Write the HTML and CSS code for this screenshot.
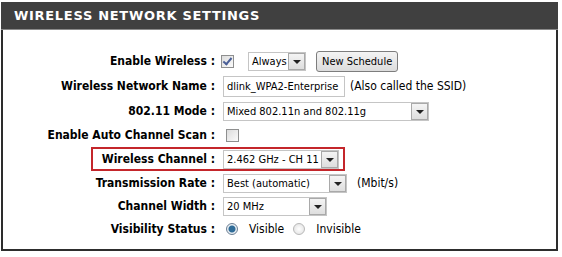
FILE: index.html
```html
<!DOCTYPE html>
<html lang="en">
<head>
  <meta charset="UTF-8" />
  <title>Wireless Network Settings</title>
  <link rel="stylesheet" href="styles.css">
</head>
<body>
  <div class="panel">
    <h2 class="panel-title">WIRELESS NETWORK SETTINGS</h2>

    <div class="panel-body">
      <div class="row">
        <label class="label">Enable Wireless :</label>
        <div class="field">
          <span class="check checked first"></span>
          <span class="select w-always"><span class="select-text">Always</span><span class="arrow"></span></span>
          <button class="btn">New Schedule</button>
        </div>
      </div>

      <div class="row tall">
        <label class="label">Wireless Network Name :</label>
        <div class="field">
          <span class="input w-ssid">dlink_WPA2-Enterprise</span>
          <span class="note">(Also called the SSID)</span>
        </div>
      </div>

      <div class="row">
        <label class="label">802.11 Mode :</label>
        <div class="field">
          <span class="select w-mode"><span class="select-text">Mixed 802.11n and 802.11g</span><span class="arrow"></span></span>
        </div>
      </div>

      <div class="row">
        <label class="label">Enable Auto Channel Scan :</label>
        <div class="field">
          <span class="check indent"></span>
        </div>
      </div>

      <div class="row highlight">
        <label class="label">Wireless Channel :</label>
        <div class="field">
          <span class="select w-channel"><span class="select-text">2.462 GHz - CH 11</span><span class="arrow"></span></span>
        </div>
      </div>

      <div class="row">
        <label class="label">Transmission Rate :</label>
        <div class="field">
          <span class="select w-rate"><span class="select-text">Best (automatic)</span><span class="arrow"></span></span>
          <span class="note">(Mbit/s)</span>
        </div>
      </div>

      <div class="row short">
        <label class="label">Channel Width :</label>
        <div class="field">
          <span class="select w-width"><span class="select-text">20 MHz</span><span class="arrow"></span></span>
        </div>
      </div>

      <div class="row">
        <label class="label">Visibility Status :</label>
        <div class="field">
          <span class="radio checked indent"></span>
          <span class="radio-text">Visible</span>
          <span class="radio"></span>
          <span class="radio-text">Invisible</span>
        </div>
      </div>
    </div>
  </div>
</body>
</html>
```

FILE: styles.css
```css
* {
  margin: 0;
  padding: 0;
  box-sizing: border-box;
}

body {
  background: #fff;
  font-family: 'DejaVu Sans Condensed', 'DejaVu Sans', sans-serif;
  color: #000;
}

.panel {
  width: 557px;
  margin: 2px 0 0 1px;
}

.panel-title {
  height: 28px;
  background: #404040;
  border-bottom: 1px solid #8a8a8a;
  color: #fff;
  font-family: 'DejaVu Sans', sans-serif;
  font-size: 13px;
  font-weight: bold;
  line-height: 27px;
  padding-left: 13px;
  letter-spacing: 0.7px;
}

.panel-body {
  border: 2px solid #2d2d2d;
  border-top: none;
  height: 221px;
  padding-top: 19px;
}

.row {
  display: flex;
  align-items: center;
  height: 24px;
}

.row.tall {
  height: 26px;
}

.row.short {
  height: 22px;
}

.label {
  width: 220px;
  text-align: right;
  font-weight: bold;
  font-size: 12px;
  padding-right: 8px;
  flex-shrink: 0;
}

.field {
  display: flex;
  align-items: center;
  font-size: 11px;
}

.highlight {
  margin-left: 88px;
  width: 254px;
  border: 2px solid #c4262b;
}

.highlight .label {
  width: 130px;
}

.check {
  width: 13px;
  height: 13px;
  border: 1px solid #8e8f8f;
  background: linear-gradient(135deg, #dcdcdc, #fbfbfb);
  margin-right: 14px;
  position: relative;
}

.check.first {
  margin-left: -2px;
}

.check.indent {
  margin-left: 3px;
}

.check.checked::after {
  content: "";
  position: absolute;
  left: 3px;
  top: 0px;
  width: 3px;
  height: 7px;
  border: solid #4a5f97;
  border-width: 0 2px 2px 0;
  transform: rotate(40deg);
}

.select,
.input {
  display: flex;
  align-items: center;
  height: 19px;
  border: 1px solid #c5c5c5;
  background: #fff;
  padding-left: 3px;
}

.select-text {
  flex: 1;
  white-space: nowrap;
}

.arrow {
  width: 17px;
  height: 17px;
  border: 1px solid #a9a9a9;
  background: linear-gradient(#f4f4f4, #dedede);
  position: relative;
}

.arrow::after {
  content: "";
  position: absolute;
  left: 4px;
  top: 6px;
  border-left: 4px solid transparent;
  border-right: 4px solid transparent;
  border-top: 4px solid #222;
}

.w-always { width: 58px; margin-right: 10px; }
.w-ssid { width: 122px; height: 21px; margin-right: 5px; }
.w-mode { width: 206px; }
.w-channel { width: 116px; }
.w-rate { width: 124px; margin-right: 10px; }
.w-width { width: 104px; }

.btn {
  font-family: inherit;
  font-size: 11px;
  height: 21px;
  padding: 0 5px;
  border: 1px solid #7d7d7d;
  border-radius: 3px;
  background: linear-gradient(#f4f4f4, #dcdcdc);
  color: #000;
}

.note {
  font-size: 12px;
}

.radio {
  width: 12px;
  height: 12px;
  border-radius: 50%;
  border: 1px solid #b8b8b8;
  background: radial-gradient(circle, #fff, #dedede);
  margin-right: 11px;
}

.radio.indent {
  margin-left: 3px;
}

.radio.checked {
  border-color: #6b7e93;
  background: radial-gradient(circle, #2f6c98 0 3px, #e8eef3 4px);
}

.radio-text {
  font-size: 12px;
  margin-right: 9px;
}
```
